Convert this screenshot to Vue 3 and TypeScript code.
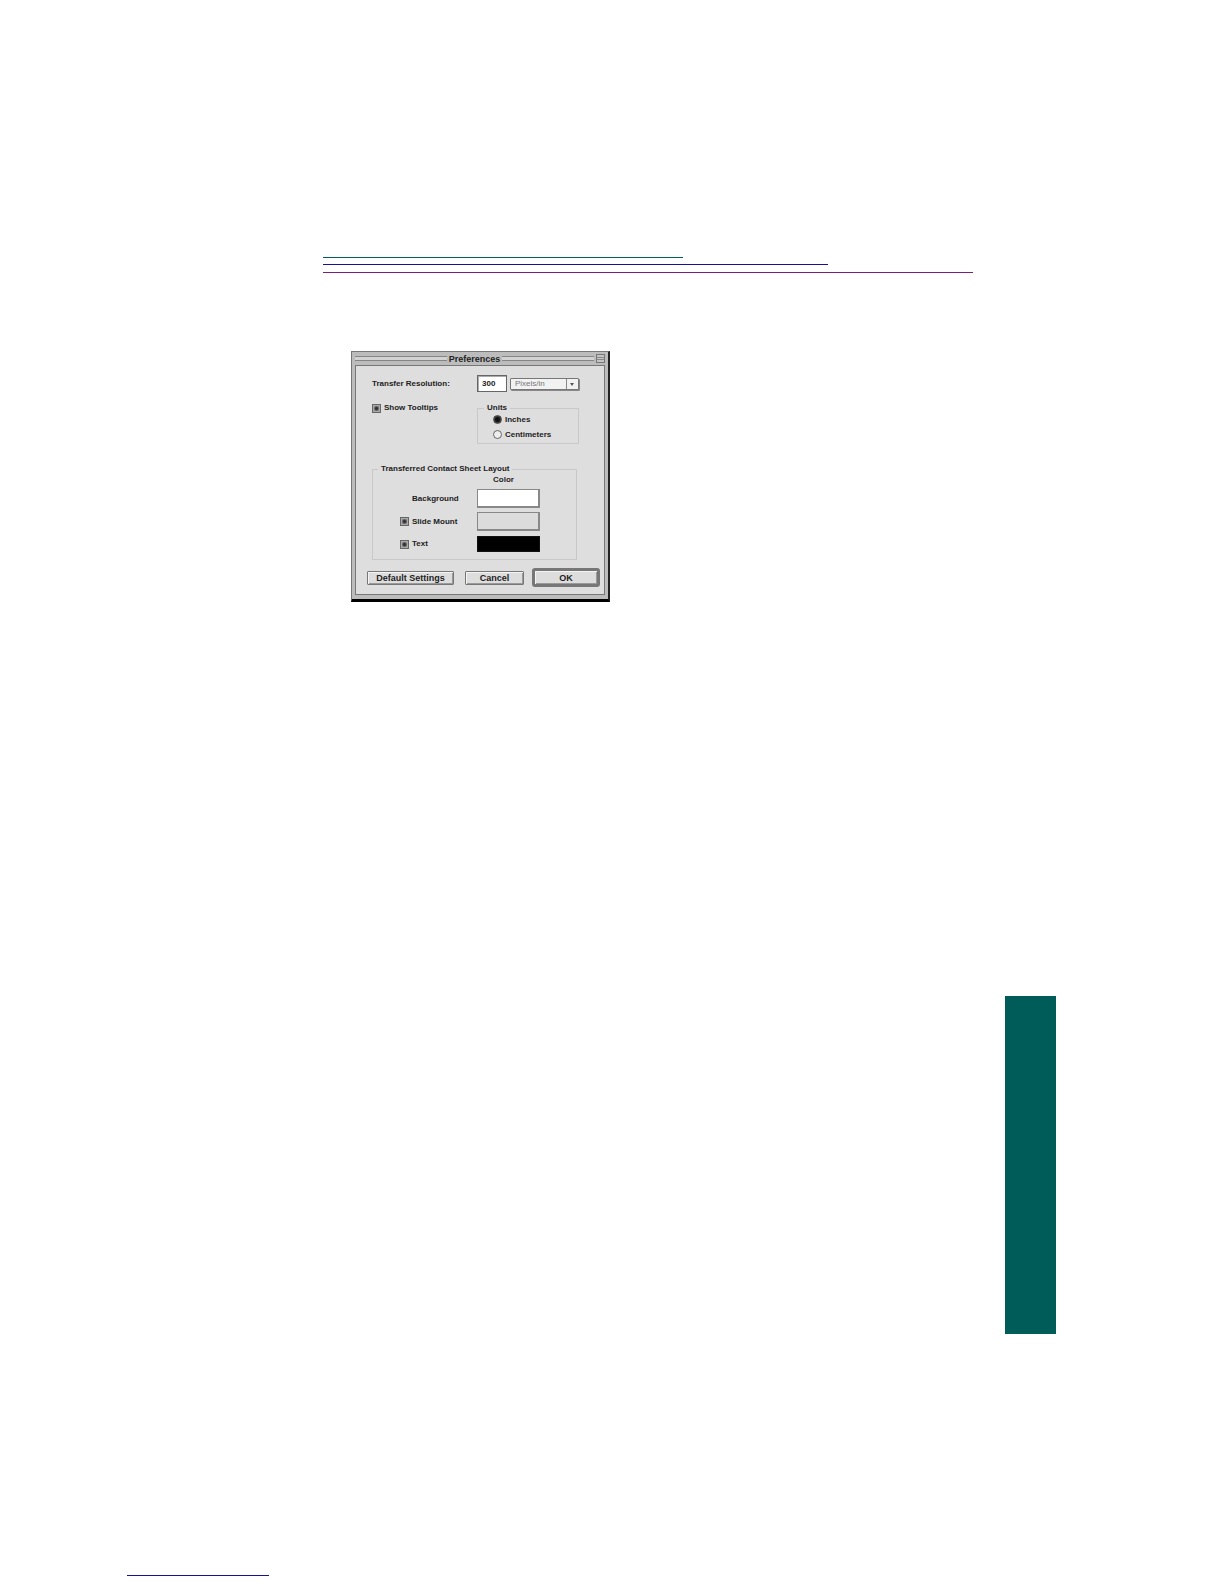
<script setup lang="ts">
import { ref } from 'vue'

const resolution = ref('300')
const pixelUnit = ref('Pixels/in')
const showTooltips = ref(true)
const units = ref('inches')
const slideMount = ref(true)
const sheetText = ref(true)
</script>

<template>
  <main class="page">
    <div class="rules">
      <div class="rule teal"></div>
      <div class="rule blue"></div>
      <div class="rule purple"></div>
    </div>

    <section class="dialog" aria-labelledby="dialog-title">
      <header class="titlebar">
        <span class="stripes"></span>
        <h1 id="dialog-title">Preferences</h1>
        <span class="stripes"></span>
        <button class="collapse" type="button" aria-label="Collapse">
          <svg viewBox="0 0 9 9" width="9" height="9">
            <rect x="0.5" y="0.5" width="8" height="8" fill="#c4c4c4" stroke="#777" />
            <path d="M1 3.500H8M1 5.500H8" stroke="#888" />
          </svg>
        </button>
      </header>

      <form class="body" @submit.prevent>
        <div class="settings">
          <label for="resolution">Transfer Resolution:</label>
          <div class="resolution">
            <input id="resolution" v-model="resolution" class="field" type="text" />
            <div class="popup">
              <select v-model="pixelUnit" aria-label="Resolution unit">
                <option>Pixels/in</option>
                <option>Pixels/cm</option>
              </select>
              <svg class="arrow" viewBox="0 0 12 10" width="12" height="10">
                <path d="M0.5 0V10" stroke="#888" />
                <path d="M4 4H8L6 7Z" fill="#555" />
              </svg>
            </div>
          </div>

          <label class="choice tooltips">
            <input v-model="showTooltips" type="checkbox" />Show Tooltips
          </label>
          <fieldset class="units">
            <legend>Units</legend>
            <label class="choice">
              <input v-model="units" type="radio" name="units" value="inches" />Inches
            </label>
            <label class="choice">
              <input v-model="units" type="radio" name="units" value="centimeters" />Centimeters
            </label>
          </fieldset>
        </div>

        <fieldset class="sheet">
          <legend>Transferred Contact Sheet Layout</legend>
          <div class="colors">
            <span class="heading">Color</span>
            <span class="name">Background</span>
            <button class="swatch white" type="button" aria-label="Background color"></button>
            <label class="choice"><input v-model="slideMount" type="checkbox" />Slide Mount</label>
            <button class="swatch" type="button" aria-label="Slide mount color"></button>
            <label class="choice"><input v-model="sheetText" type="checkbox" />Text</label>
            <button class="swatch black" type="button" aria-label="Text color"></button>
          </div>
        </fieldset>

        <footer class="actions">
          <button class="push wide" type="button">Default Settings</button>
          <button class="push" type="button">Cancel</button>
          <button class="push default" type="submit">OK</button>
        </footer>
      </form>
    </section>

    <aside class="tab"></aside>
    <div class="footline"></div>
  </main>
</template>

<style>
body {
  margin: 0;
  background: #fff;
}
</style>

<style scoped>
* {
  box-sizing: border-box;
}

.page {
  display: flex;
  flex-direction: column;
  padding: 257px 168px 8px 127px;
}

.rules {
  display: flex;
  flex-direction: column;
  gap: 6px;
  margin: 0 83px 0 196px;
}

.rule {
  height: 1px;
}

.teal {
  width: 55.4%;
  background: #006060;
}

.blue {
  width: 77.7%;
  background: #1a1098;
}

.purple {
  margin-top: 1px;
  background: #7d1d78;
}

.dialog {
  width: 259px;
  margin: 78px 0 0 224px;
  padding: 0 3px 4px;
  border: 1px solid #777;
  border-right: 2px solid #222;
  border-bottom: 3px solid #000;
  background: #bcbcbc;
  color: #222;
  font: bold 8px/10px "Liberation Sans", Arial, sans-serif;
}

.titlebar {
  display: flex;
  align-items: center;
  gap: 2px;
  height: 13px;
}

.titlebar h1 {
  margin: 0;
  font-size: 9px;
  line-height: 12px;
}

.stripes {
  flex: 1;
  height: 5px;
  border: solid #858585;
  border-width: 1px 0;
  background: #d2d2d2;
}

.collapse {
  display: flex;
  padding: 0;
  border: 0;
  background: none;
}

.body {
  padding: 9px 4px 7px 11px;
  border: 1px solid #777;
  background: #dedede;
}

.settings {
  display: grid;
  grid-template-columns: 105px 102px;
  align-items: center;
  row-gap: 11px;
  margin-left: 5px;
}

.resolution {
  display: flex;
  align-items: center;
  gap: 3px;
}

.field {
  width: 30px;
  height: 17px;
  padding: 0 4px;
  border: 1px solid #666;
  border-radius: 0;
  box-shadow: inset 1px 1px #aaa;
  background: #fff;
  color: #222;
  font: inherit;
  outline: 0;
}

.popup {
  display: flex;
  flex: 1;
  height: 12px;
  border: 1px solid #777;
  border-radius: 1px;
  box-shadow: 1px 1px #888;
  background: #f2f2f2;
}

.popup select {
  appearance: none;
  flex: 1;
  min-width: 0;
  padding: 0 4px;
  border: 0;
  background: transparent;
  color: #777;
  font: 8px/10px "Liberation Sans", Arial, sans-serif;
}

.arrow {
  flex: none;
}

.choice {
  display: flex;
  align-items: center;
  gap: 3px;
}

.tooltips {
  align-self: start;
}

input[type="checkbox"],
input[type="radio"] {
  appearance: none;
  flex: none;
  width: 9px;
  height: 9px;
  margin: 0;
  border: 1px solid #666;
  background: #ccc;
}

input[type="checkbox"]:checked {
  box-shadow: inset 0 0 0 1px #aaa;
  background: radial-gradient(#333 1px, #999 3px);
}

input[type="radio"] {
  border-radius: 50%;
  background: #eee;
}

input[type="radio"]:checked {
  border-color: #444;
  background: radial-gradient(#111 2px, #666 4px);
}

fieldset {
  min-width: 0;
  margin: 0;
  border: 1px solid #c8c8c8;
}

legend {
  padding: 0 3px;
}

.units {
  padding: 0 0 2px 15px;
}

.units legend {
  margin-left: -9px;
}

.units .choice {
  height: 13px;
}

.units .choice + .choice {
  margin-top: 2px;
}

.sheet {
  width: 205px;
  margin: 20px 0 0 5px;
  padding: 1px 0 6px 27px;
}

.sheet legend {
  margin-left: -22px;
}

.colors {
  display: grid;
  grid-template-columns: 64px 63px;
  column-gap: 13px;
  row-gap: 4px;
  align-items: center;
}

.heading {
  grid-column: 2;
  padding-left: 16px;
}

.name {
  padding-left: 12px;
}

.swatch {
  height: 19px;
  padding: 0;
  border: 1px solid #888;
  box-shadow: inset -1px -1px #888;
  background: #dcdcdc;
}

.white {
  background: #fff;
}

.black {
  height: 16px;
  margin: 1px 0;
  border-color: #111;
  box-shadow: none;
  background: #000;
}

.actions {
  display: flex;
  align-items: center;
  margin-top: 8px;
}

.push {
  width: 59px;
  height: 14px;
  padding: 0;
  border: 1px solid #777;
  border-radius: 1px;
  box-shadow: inset 1px 1px #f4f4f4, inset -1px -1px #999;
  background: #ddd;
  color: #222;
  font: bold 9px/10px "Liberation Sans", Arial, sans-serif;
}

.wide {
  width: 87px;
  margin-right: 11px;
}

.default {
  width: 68px;
  height: 19px;
  margin-left: 8px;
  border: 3px solid #777;
  border-radius: 3px;
}

.tab {
  align-self: flex-end;
  width: 51px;
  height: 338px;
  margin-top: 394px;
  background: #005c59;
}

.footline {
  width: 142px;
  height: 1px;
  margin-top: 241px;
  background: #14148c;
}
</style>
